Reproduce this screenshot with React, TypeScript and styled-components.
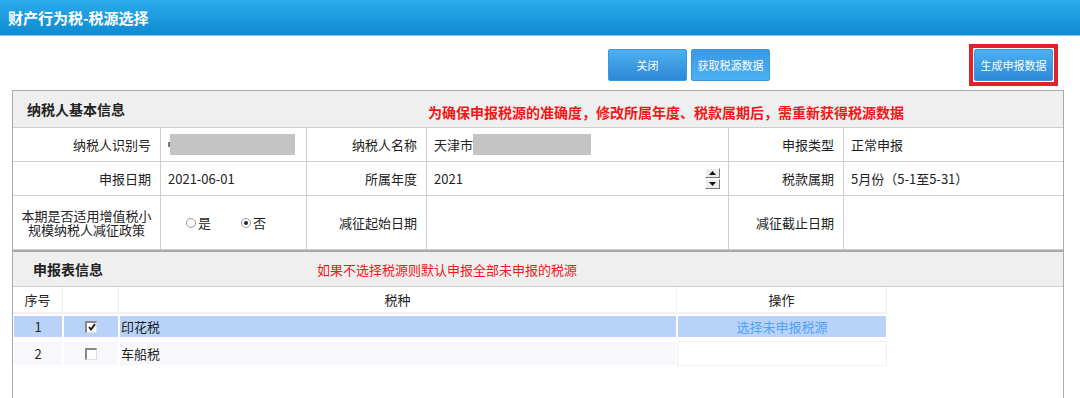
import * as React from "react";
import styled, { createGlobalStyle } from "styled-components";

const GlobalStyle = createGlobalStyle`
  body {
    margin: 0;
    background: #ffffff;
    font-family: "Noto Sans CJK SC", "Liberation Sans", sans-serif;
    font-size: 13px;
    color: #222;
  }
`;

const TitleBar = styled.div`
  height: 35px;
  background: linear-gradient(#2aaced, #0e8ad1);
  border-bottom: 1px solid #86c9ee;
  display: flex;
  align-items: center;
  padding-left: 8px;
  color: #fff;
  font-size: 15px;
  font-weight: bold;
`;

const Page = styled.div`
  padding: 0 16px 0 12px;
`;

const Toolbar = styled.div`
  height: 54px;
  display: flex;
  align-items: center;
`;

const ButtonGroup = styled.div`
  display: flex;
  gap: 4px;
  margin-left: 596px;
  margin-top: 4px;
`;

const Button = styled.button<{ $alt?: boolean }>`
  width: 79px;
  height: 32px;
  border: 1px solid #3b98df;
  border-radius: 2px;
  background: ${(p) =>
    p.$alt
      ? "linear-gradient(#3a98e4, #4bb1f1)"
      : "linear-gradient(#4db0f0, #2d88d6)"};
  color: #fff;
  font-family: inherit;
  font-size: 11px;
  padding: 0;
`;

const Highlight = styled.div`
  margin-left: auto;
  margin-right: 6px;
  margin-top: 4px;
  border: 4px solid #e3212b;
  padding: 1px;
  display: flex;
`;

const Panel = styled.div<{ $grow?: boolean }>`
  border: 1px solid #a9a9a9;
  ${(p) => (p.$grow ? "min-height: 160px;" : "")}
`;

const PanelHead = styled.div<{ $h: number }>`
  height: ${(p) => p.$h}px;
  background: #efefef;
  display: flex;
  align-items: center;
  border-bottom: 1px solid #cfcfcf;
`;

const PanelTitle = styled.div<{ $w: number; $pad: number }>`
  width: ${(p) => p.$w}px;
  padding-left: ${(p) => p.$pad}px;
  font-size: 14px;
  font-weight: bold;
  color: #222;
`;

const Notice = styled.div<{ $bold?: boolean }>`
  color: #f01818;
  font-size: ${(p) => (p.$bold ? 14 : 13)}px;
  font-weight: ${(p) => (p.$bold ? "bold" : "normal")};
  margin-top: ${(p) => (p.$bold ? 6 : 0)}px;
`;

const InfoGrid = styled.div`
  display: grid;
  grid-template-columns: 148px 146px 120px 302px 115px 1fr;
  grid-template-rows: 34px 34px 54px;
`;

const Cell = styled.div<{ $label?: boolean }>`
  display: flex;
  align-items: center;
  justify-content: ${(p) => (p.$label ? "flex-end" : "flex-start")};
  padding: ${(p) => (p.$label ? "0 9px 0 4px" : "0 7px")};
  border-right: 1px solid #cfcfcf;
  border-bottom: 1px solid #cfcfcf;
  color: #222;
  &:nth-child(6n) {
    border-right: none;
  }
`;

const WrapLabel = styled(Cell)`
  justify-content: center;
  text-align: center;
  line-height: 14px;
  padding: 0 4px;
`;

const Masked = styled.span<{ $w: number }>`
  display: inline-block;
  width: ${(p) => p.$w}px;
  height: 21px;
  background: #c4c4c4;
`;

const Tick = styled.span`
  display: inline-block;
  width: 2px;
  height: 5px;
  background: #777;
`;

const Spinner = styled.span`
  margin-left: auto;
  display: flex;
  flex-direction: column;
  gap: 1px;
  margin-right: 1px;
`;

const SpinBtn = styled.span`
  width: 13px;
  height: 8px;
  background: #ececec;
  border-right: 1px solid #777;
  border-bottom: 1px solid #777;
  border-top: 1px solid #fff;
  border-left: 1px solid #fff;
  display: flex;
  align-items: center;
  justify-content: center;
`;

const RadioGroup = styled.div`
  display: flex;
  gap: 30px;
  padding-left: 18px;
`;

const RadioItem = styled.label`
  display: flex;
  align-items: center;
  gap: 2px;
`;

const RadioDot = styled.span<{ $on?: boolean }>`
  width: 8px;
  height: 8px;
  border-radius: 50%;
  border: 1px solid #999;
  background: #fff;
  display: flex;
  align-items: center;
  justify-content: center;
  &::after {
    content: "";
    width: 4px;
    height: 4px;
    border-radius: 50%;
    background: ${(p) => (p.$on ? "#222" : "transparent")};
  }
`;

const Table = styled.div`
  width: 874px;
  display: grid;
  grid-template-columns: 50px 56px 558px 210px;
`;

const TH = styled.div`
  height: 25px;
  display: flex;
  align-items: center;
  justify-content: center;
  border-right: 1px solid #f1f1f1;
  border-bottom: 2px solid #f1f1f1;
  color: #222;
`;

const TD = styled.div<{ $sel?: boolean; $left?: boolean; $plain?: boolean }>`
  height: ${(p) => (p.$sel ? 21 : 23)}px;
  margin: 2px 1px 3px 1px;
  display: flex;
  align-items: center;
  justify-content: ${(p) => (p.$left ? "flex-start" : "center")};
  padding-left: ${(p) => (p.$left ? 1 : 0)}px;
  background: ${(p) => (p.$sel ? "#b8d3f7" : p.$plain ? "#fff" : "#f8f8fc")};
  box-shadow: ${(p) => (p.$plain && !p.$sel ? "0 0 0 1px #f0f0f0" : "none")};
  color: #222;
`;

const Link = styled.span`
  color: #4ea3f5;
`;

const CheckBox = styled.span`
  width: 9px;
  height: 9px;
  background: #fff;
  border-top: 2px solid #888;
  border-left: 2px solid #888;
  border-right: 1px solid #ddd;
  border-bottom: 1px solid #ddd;
  display: flex;
  align-items: center;
  justify-content: center;
`;

function Check() {
  return (
    <svg width="8" height="8" viewBox="0 0 8 8">
      <path d="M1 4 L3 6.5 L7 1" stroke="#111" strokeWidth="1.8" fill="none" />
    </svg>
  );
}

interface TaxRow {
  no: number;
  name: string;
  checked: boolean;
  action?: string;
}

const rows: TaxRow[] = [
  { no: 1, name: "印花税", checked: true, action: "选择未申报税源" },
  { no: 2, name: "车船税", checked: false },
];

export default function App(): React.ReactElement {
  return (
    <>
      <GlobalStyle />
      <TitleBar>财产行为税-税源选择</TitleBar>
      <Page>
        <Toolbar>
          <ButtonGroup>
            <Button>关闭</Button>
            <Button $alt>获取税源数据</Button>
          </ButtonGroup>
          <Highlight>
            <Button>生成申报数据</Button>
          </Highlight>
        </Toolbar>

        <Panel>
          <PanelHead $h={36}>
            <PanelTitle $w={401} $pad={14}>纳税人基本信息</PanelTitle>
            <Notice $bold>
              为确保申报税源的准确度，修改所属年度、税款属期后，需重新获得税源数据
            </Notice>
          </PanelHead>
          <InfoGrid>
            <Cell $label>纳税人识别号</Cell>
            <Cell>
              <Tick />
              <Masked $w={125} />
            </Cell>
            <Cell $label>纳税人名称</Cell>
            <Cell>
              天津市
              <Masked $w={118} />
            </Cell>
            <Cell $label>申报类型</Cell>
            <Cell>正常申报</Cell>

            <Cell $label>申报日期</Cell>
            <Cell>2021-06-01</Cell>
            <Cell $label>所属年度</Cell>
            <Cell>
              2021
              <Spinner>
                <SpinBtn>
                  <svg width="7" height="4" viewBox="0 0 7 4">
                    <path d="M3.5 0 L7 4 L0 4 Z" fill="#111" />
                  </svg>
                </SpinBtn>
                <SpinBtn>
                  <svg width="7" height="4" viewBox="0 0 7 4">
                    <path d="M0 0 L7 0 L3.5 4 Z" fill="#111" />
                  </svg>
                </SpinBtn>
              </Spinner>
            </Cell>
            <Cell $label>税款属期</Cell>
            <Cell>5月份（5-1至5-31）</Cell>

            <WrapLabel>本期是否适用增值税小规模纳税人减征政策</WrapLabel>
            <Cell>
              <RadioGroup>
                <RadioItem>
                  <RadioDot />是
                </RadioItem>
                <RadioItem>
                  <RadioDot $on />否
                </RadioItem>
              </RadioGroup>
            </Cell>
            <Cell $label>减征起始日期</Cell>
            <Cell />
            <Cell $label>减征截止日期</Cell>
            <Cell />
          </InfoGrid>
        </Panel>

        <Panel $grow>
          <PanelHead $h={34}>
            <PanelTitle $w={284} $pad={20}>申报表信息</PanelTitle>
            <Notice>如果不选择税源则默认申报全部未申报的税源</Notice>
          </PanelHead>
          <Table>
            <TH>序号</TH>
            <TH />
            <TH>税种</TH>
            <TH>操作</TH>
            {rows.map((r) => (
              <React.Fragment key={r.no}>
                <TD $sel={r.checked}>{r.no}</TD>
                <TD $sel={r.checked}>
                  <CheckBox>{r.checked && <Check />}</CheckBox>
                </TD>
                <TD $sel={r.checked} $left>
                  {r.name}
                </TD>
                <TD $sel={r.checked} $plain>
                  {r.action && <Link>{r.action}</Link>}
                </TD>
              </React.Fragment>
            ))}
          </Table>
        </Panel>
      </Page>
    </>
  );
}
